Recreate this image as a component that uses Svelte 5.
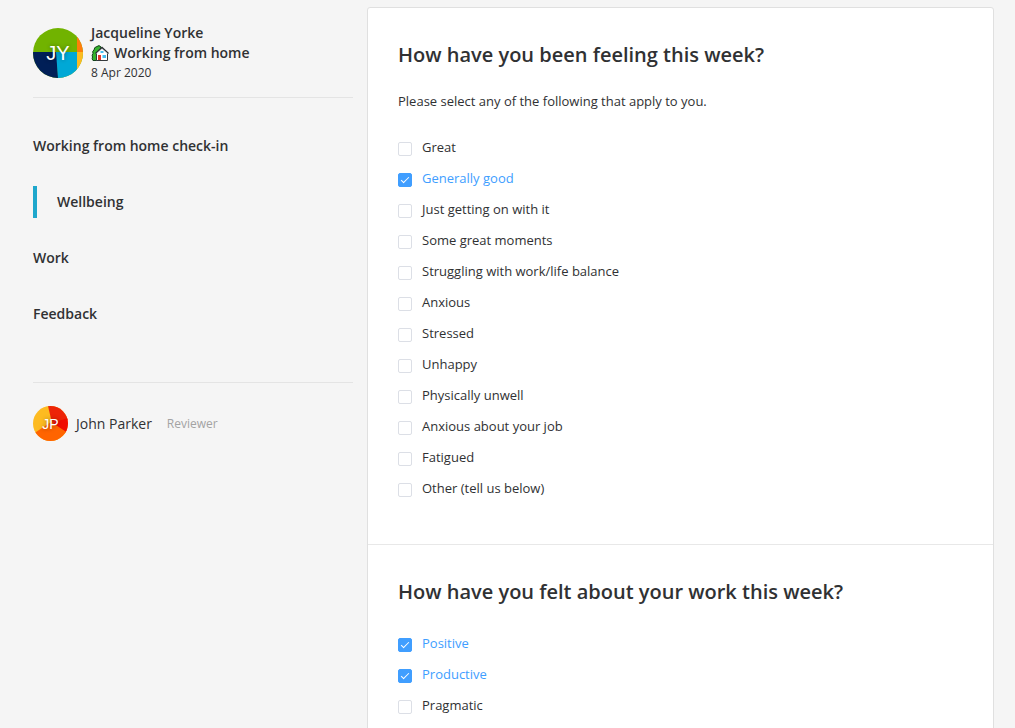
<script lang="ts">
	type Option = { label: string; checked: boolean };
	type Question = { id: string; title: string; hint?: string; options: Option[] };

	const option = (label: string, checked = false): Option => ({ label, checked });

	const steps = ['Working from home check-in', 'Wellbeing', 'Work', 'Feedback'];
	let current = $state('Wellbeing');

	let questions = $state<Question[]>([
		{
			id: 'feeling',
			title: 'How have you been feeling this week?',
			hint: 'Please select any of the following that apply to you.',
			options: [
				option('Great'),
				option('Generally good', true),
				option('Just getting on with it'),
				option('Some great moments'),
				option('Struggling with work/life balance'),
				option('Anxious'),
				option('Stressed'),
				option('Unhappy'),
				option('Physically unwell'),
				option('Anxious about your job'),
				option('Fatigued'),
				option('Other (tell us below)')
			]
		},
		{
			id: 'work',
			title: 'How have you felt about your work this week?',
			options: [option('Positive', true), option('Productive', true), option('Pragmatic')]
		}
	]);
</script>

<div class="page">
	<aside class="sidebar">
		<header class="employee">
			<div class="avatar large">
				<svg viewBox="0 0 50 50" aria-hidden="true">
					<rect width="50" height="50" fill="#71b300" />
					<path d="M0 24H24L25 50H0Z" fill="#001f57" />
					<path d="M23 24H44V50H25Z" fill="#00a8d6" />
					<path d="M44 0H50V24H44Z" fill="#ff7d0a" />
					<path d="M44 24H50V50H44Z" fill="#fdbb21" />
				</svg>
				<span>JY</span>
			</div>
			<div class="details">
				<div class="name">Jacqueline Yorke</div>
				<div class="status">
					<svg class="house" viewBox="0 0 18 18" aria-hidden="true">
						<path
							d="M2 16.5Q0.5 15 1.5 13Q0.5 11 2 9.5Q1 7 3 6Q3 3 6 2.5Q8 0.5 10 3V16.5Z"
							fill="#35b32f"
							stroke="#14431a"
						/>
						<path d="M5.5 9L11 4L16.5 9V16.5H5.5Z" fill="#fff" stroke="#33383b" />
						<path d="M4.5 9.5L11 3.5L17.5 9.5" fill="none" stroke="#2b3033" stroke-width="1.5" />
						<path d="M5.5 9.5L11 4.8L16.5 9.5" fill="none" stroke="#cfd6da" stroke-width="0.8" />
						<path d="M7 11H10V16H7Z" fill="#e5352b" />
						<path d="M11.5 11H15V14H11.5ZM9.5 7H12.5V9H9.5Z" fill="#45bdf0" />
					</svg>
					<span>Working from home</span>
				</div>
				<div class="date">8 Apr 2020</div>
			</div>
		</header>

		<nav>
			{#each steps as step}
				<button
					type="button"
					class:active={current === step}
					aria-current={current === step ? 'step' : undefined}
					onclick={() => (current = step)}
				>
					{step}
				</button>
			{/each}
		</nav>

		<div class="reviewer">
			<div class="avatar">
				<svg viewBox="0 0 35 35" aria-hidden="true">
					<rect width="35" height="35" fill="#fdbb21" />
					<path d="M15 0H35V14L19 17Z" fill="#ed2408" />
					<path d="M19 17L35 12V28Z" fill="#f00c00" />
					<path d="M0 28L18 16L35 27V35H0Z" fill="#ff6400" />
				</svg>
				<span>JP</span>
			</div>
			<span class="reviewer-name">John Parker</span>
			<span class="role">Reviewer</span>
		</div>
	</aside>

	<main class="card">
		{#each questions as question (question.id)}
			<section aria-labelledby={question.id}>
				<h2 id={question.id}>{question.title}</h2>
				{#if question.hint}
					<p>{question.hint}</p>
				{/if}
				<div class="options">
					{#each question.options as item}
						<label class:checked={item.checked}>
							<input type="checkbox" bind:checked={item.checked} />
							<span>{item.label}</span>
						</label>
					{/each}
				</div>
			</section>
		{/each}
	</main>
</div>

<style>
	:global(body) {
		margin: 0;
		background: #f5f5f5;
	}

	.page {
		display: grid;
		grid-template-columns: 320px minmax(0, 1fr);
		align-items: start;
		gap: 14px;
		padding: 7px 21px 7px 33px;
		color: #303133;
		font-family: 'Open Sans', sans-serif;
		font-size: 14px;
		line-height: 20px;
	}

	.employee {
		display: flex;
		align-items: center;
		gap: 8px;
		padding: 16px 0 14px;
		border-bottom: 1px solid #e4e4e4;
	}

	.avatar {
		display: grid;
		flex: none;
		width: 35px;
		height: 35px;
		overflow: hidden;
		border-radius: 50%;
		color: #fff;
		font-family: 'Liberation Sans', sans-serif;
		font-size: 14px;
		text-shadow: 0 0 4px rgba(0, 0, 0, 0.4);
	}

	.avatar.large {
		width: 50px;
		height: 50px;
		font-size: 20px;
	}

	.avatar svg,
	.avatar span {
		grid-area: 1 / 1;
	}

	.avatar svg {
		width: 100%;
		height: 100%;
	}

	.avatar span {
		place-self: center;
	}

	.name,
	.status {
		font-weight: 600;
	}

	.status {
		display: flex;
		align-items: center;
		gap: 5px;
	}

	.house {
		width: 18px;
		height: 18px;
	}

	.date {
		font-size: 12px;
	}

	nav {
		display: flex;
		flex-direction: column;
		gap: 24px;
		padding: 32px 0 52px;
		border-bottom: 1px solid #e4e4e4;
	}

	nav button {
		height: 32px;
		padding: 0;
		border: 0;
		background: none;
		color: inherit;
		font: inherit;
		font-weight: 600;
		text-align: left;
		cursor: pointer;
	}

	nav button.active {
		padding-left: 20px;
		border-left: 4px solid #1ea7cc;
	}

	.reviewer {
		display: flex;
		align-items: center;
		padding: 23px 0;
	}

	.reviewer-name {
		margin: 0 15px 0 8px;
	}

	.role {
		color: #a3a3a3;
		font-size: 12px;
	}

	.card {
		border: 1px solid #e0e0e0;
		border-radius: 3px;
		background: #fff;
	}

	section {
		padding: 30px 30px 40px;
	}

	section + section {
		border-top: 1px solid #e8e8e8;
	}

	h2 {
		margin: 0 0 19px;
		font-size: 20px;
		font-weight: 600;
		line-height: 34px;
	}

	p {
		margin: 0 0 21px;
		font-size: 13px;
		line-height: 20px;
	}

	.options {
		display: flex;
		flex-direction: column;
		align-items: flex-start;
		font-size: 13px;
	}

	label {
		display: flex;
		gap: 10px;
		line-height: 31px;
		cursor: pointer;
	}

	label.checked {
		color: #409eff;
	}

	input {
		appearance: none;
		display: grid;
		box-sizing: border-box;
		width: 14px;
		height: 14px;
		margin: 10px 0 0;
		border: 1px solid #dcdfe6;
		border-radius: 2px;
		background: #fff;
		cursor: pointer;
	}

	input:checked {
		border-color: #409eff;
		background: #409eff;
	}

	input:checked::after {
		content: '';
		justify-self: center;
		width: 3px;
		height: 7px;
		margin-top: 1px;
		border: solid #fff;
		border-width: 0 1px 1px 0;
		transform: rotate(45deg);
	}
</style>
